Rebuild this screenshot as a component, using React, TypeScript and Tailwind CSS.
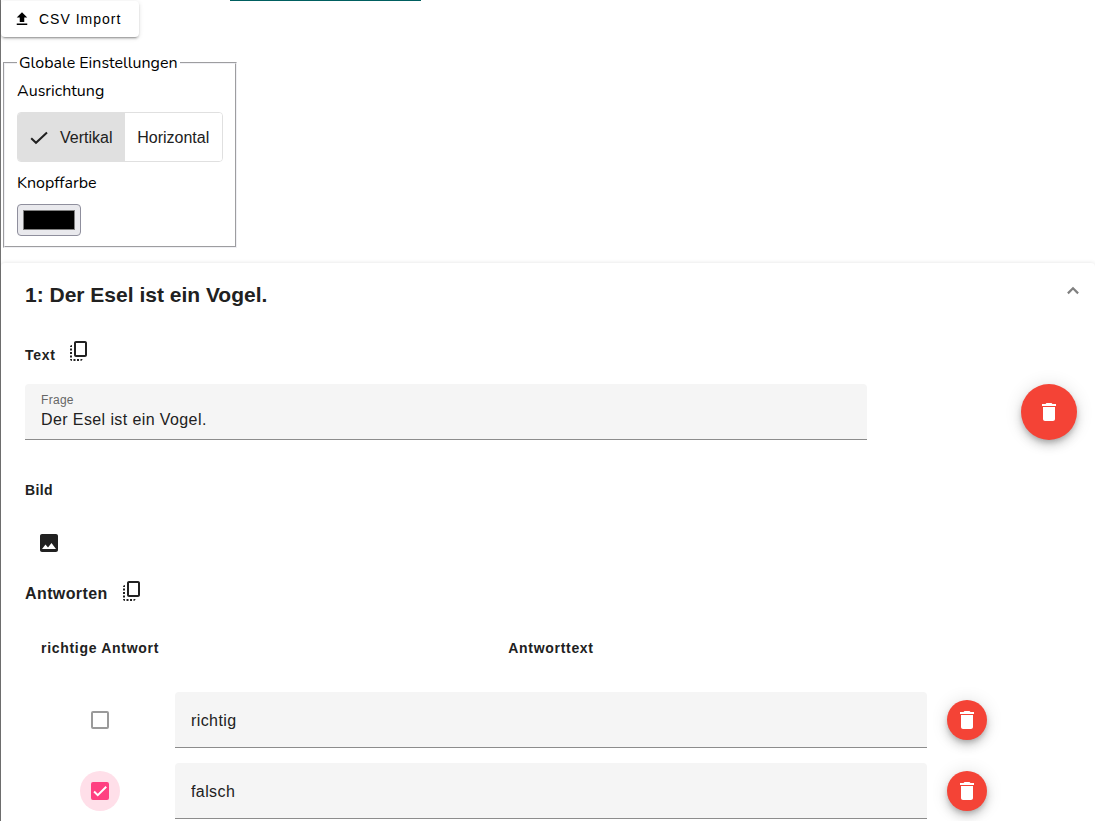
import { useState } from "react";
import type { ReactNode } from "react";
import { MdCopyAll, MdDelete, MdImage, MdUpload } from "react-icons/md";

type Answer = { id: number; text: string; correct: boolean };

const FAB_SHADOW =
  "shadow-[0_3px_5px_-1px_rgba(0,0,0,0.2),0_6px_10px_0_rgba(0,0,0,0.14),0_1px_18px_0_rgba(0,0,0,0.12)]";

function DeleteButton({ label, mini = false }: { label: string; mini?: boolean }) {
  return (
    <button
      type="button"
      aria-label={label}
      className={`flex shrink-0 items-center justify-center rounded-full bg-[#f44336] text-white ${FAB_SHADOW} ${mini ? "size-10" : "size-14"}`}
    >
      <MdDelete className="size-6" />
    </button>
  );
}

function CopyButton({ label }: { label: string }) {
  return (
    <button type="button" aria-label={label} className="size-6">
      <MdCopyAll className="size-6" />
    </button>
  );
}

function SegmentButton({ active, onClick, children }: { active: boolean; onClick: () => void; children: ReactNode }) {
  return (
    <button
      type="button"
      aria-pressed={active}
      onClick={onClick}
      className={`flex h-12 items-center gap-3 px-3 pt-0.5 font-['Liberation_Sans',sans-serif] text-base text-[#212121] ${active ? "bg-[#e0e0e0]" : "bg-white"}`}
    >
      {active && (
        <svg viewBox="0 0 18 18" className="size-[18px]" fill="none" stroke="currentColor" strokeWidth="2" aria-hidden="true">
          <path d="M1.2 9.2 6 13.8 17 3.4" />
        </svg>
      )}
      {children}
    </button>
  );
}

function AnswerCheckbox({ checked, onChange, label }: { checked: boolean; onChange: () => void; label: string }) {
  return (
    <label
      className={`relative flex size-10 items-center justify-center rounded-full ${checked ? "bg-[#ffdfe9]" : ""}`}
    >
      <input
        type="checkbox"
        aria-label={label}
        checked={checked}
        onChange={onChange}
        className="size-[18px] appearance-none rounded-xs border-2 border-[#9a9a9a] bg-white checked:border-[#ff4081] checked:bg-[#ff4081]"
      />
      {checked && (
        <svg
          viewBox="0 0 24 24"
          className="pointer-events-none absolute size-[18px]"
          fill="none"
          stroke="white"
          strokeWidth="2.6"
          aria-hidden="true"
        >
          <path d="M4.1 12.7 9 17.6 20.3 6.3" />
        </svg>
      )}
    </label>
  );
}

export default function App() {
  const [orientation, setOrientation] = useState("vertical");
  const [color, setColor] = useState("#000000");
  const [question, setQuestion] = useState("Der Esel ist ein Vogel.");
  const [answers, setAnswers] = useState<Answer[]>([
    { id: 1, text: "richtig", correct: false },
    { id: 2, text: "falsch", correct: true },
  ]);

  const update = (id: number, change: Partial<Answer>) =>
    setAnswers(answers.map((a) => (a.id === id ? { ...a, ...change } : a)));

  return (
    <main className="min-h-screen border-l border-[#737373] bg-white font-['Liberation_Sans',sans-serif] text-[#212121]">
      <div className="ml-[229px] h-px w-[191px] bg-[#005f60]" />
      <button
        type="button"
        className="flex h-9 items-center gap-2 rounded bg-white pr-[18px] pl-3 text-sm tracking-[1px] text-black shadow-[0_3px_1px_-2px_rgba(0,0,0,0.2),0_2px_2px_0_rgba(0,0,0,0.14),0_1px_5px_0_rgba(0,0,0,0.12)]"
      >
        <MdUpload className="size-[18px]" />
        CSV Import
      </button>

      <fieldset className="mx-0.5 mt-3.5 w-fit border-2 border-[#f0f0f4] px-3 pt-1 pb-2.5 font-[Nunito,Lato,sans-serif] text-base leading-6 text-black [border-style:groove]">
        <legend className="px-0.5">Globale Einstellungen</legend>
        <p id="orientation">Ausrichtung</p>
        <div
          role="group"
          aria-labelledby="orientation"
          className="mt-[9px] flex w-[206px] overflow-hidden rounded border border-[#e0e0e0] *:grow"
        >
          <SegmentButton active={orientation === "vertical"} onClick={() => setOrientation("vertical")}>
            Vertikal
          </SegmentButton>
          <SegmentButton active={orientation === "horizontal"} onClick={() => setOrientation("horizontal")}>
            Horizontal
          </SegmentButton>
        </div>
        <label htmlFor="button-color" className="mt-[9px] block">
          Knopffarbe
        </label>
        <input
          id="button-color"
          type="color"
          value={color}
          onChange={(e) => setColor(e.target.value)}
          className="mt-[9px] block h-8 w-16 appearance-none rounded border border-[#8f8f9d] bg-[#e9e9ed] p-[5px] [&::-webkit-color-swatch]:rounded-none [&::-webkit-color-swatch]:border [&::-webkit-color-swatch]:border-[#808080] [&::-webkit-color-swatch-wrapper]:p-0"
        />
      </fieldset>

      <section className="mt-[15px] rounded-t pt-4 shadow-[0_0_4px_rgba(0,0,0,0.12)]">
        <header className="flex items-start justify-between pr-2.5 pl-6">
          <h1 className="text-[21px] leading-8 font-bold">1: Der Esel ist ein Vogel.</h1>
          <button type="button" aria-label="Einklappen" className="size-6 text-[#808080]">
            <svg viewBox="0 0 24 24" className="size-6" fill="none" stroke="currentColor" strokeWidth="2.2" aria-hidden="true">
              <path d="M6.9 14.4 12 9.3l5.1 5.1" />
            </svg>
          </button>
        </header>

        <div className="pt-7 pr-[18px] pb-4 pl-6">
          <div className="flex items-end gap-[11px]">
            <h2 className="text-sm leading-4 font-bold tracking-wider">Text</h2>
            <CopyButton label="Text kopieren" />
          </div>

          <div className="mt-[21px] flex items-center justify-between">
            <div className="flex h-14 w-4/5 flex-col rounded-t border-b border-[#8c8c8c] bg-[#f5f5f5] px-4 pt-2">
              <label htmlFor="question" className="text-xs leading-4 tracking-wide text-[#666666]">
                Frage
              </label>
              <input
                id="question"
                value={question}
                onChange={(e) => setQuestion(e.target.value)}
                className="h-6 w-full bg-transparent text-base tracking-wide outline-none"
              />
            </div>
            <DeleteButton label="Frage löschen" />
          </div>

          <h2 className="mt-[42px] text-sm leading-4 font-bold tracking-wide">Bild</h2>
          <button type="button" aria-label="Bild auswählen" className="mt-[21px] flex size-12 items-center justify-center">
            <MdImage className="size-6" />
          </button>

          <div className="mt-3 flex items-end gap-3">
            <h2 className="text-base leading-[18px] font-bold tracking-wide">Antworten</h2>
            <CopyButton label="Antworten kopieren" />
          </div>

          <table className="mt-[35px] w-full table-fixed">
            <thead>
              <tr className="text-sm leading-5 tracking-wider">
                <th className="w-[150px] p-0 pb-[19px] font-bold">richtige Antwort</th>
                <th className="p-0 pb-[19px] font-bold">Antworttext</th>
                <td className="w-[150px] p-0" />
              </tr>
            </thead>
            <tbody>
              {answers.map((answer) => (
                <tr key={answer.id}>
                  <td className="pt-[15px]">
                    <div className="flex justify-center">
                      <AnswerCheckbox
                        label={`${answer.text}: richtige Antwort`}
                        checked={answer.correct}
                        onChange={() => update(answer.id, { correct: !answer.correct })}
                      />
                    </div>
                  </td>
                  <td className="pt-[15px]">
                    <input
                      aria-label="Antworttext"
                      value={answer.text}
                      onChange={(e) => update(answer.id, { text: e.target.value })}
                      className="block h-14 w-full rounded-t border-b border-[#8c8c8c] bg-[#f5f5f5] px-4 pt-0.5 text-base tracking-wide outline-none"
                    />
                  </td>
                  <td className="pt-[15px] pl-5">
                    <DeleteButton mini label={`${answer.text} löschen`} />
                  </td>
                </tr>
              ))}
            </tbody>
          </table>
        </div>
      </section>
    </main>
  );
}
